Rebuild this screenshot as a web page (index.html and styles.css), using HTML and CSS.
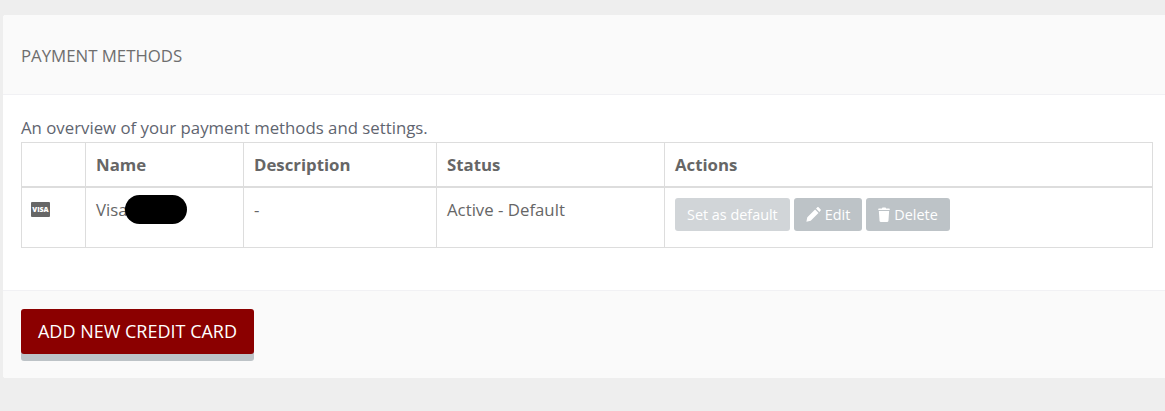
FILE: index.html
```html
<!DOCTYPE html>
<html lang="en">
<head>
<meta charset="utf-8">
<title>Payment methods</title>
<link rel="stylesheet" href="styles.css">
</head>
<body>
<section class="panel">
  <header class="panel-head"><h2>PAYMENT METHODS</h2></header>
  <div class="panel-body">
    <p class="intro">An overview of your payment methods and settings.</p>
    <table class="methods">
      <colgroup><col class="c-icon"><col class="c-name"><col class="c-desc"><col class="c-status"><col></colgroup>
      <thead>
        <tr><th></th><th>Name</th><th>Description</th><th>Status</th><th>Actions</th></tr>
      </thead>
      <tbody>
        <tr>
          <td><span class="visa">VISA</span></td>
          <td><span class="card-name">Visa<span class="redact"></span></span></td>
          <td>-</td>
          <td>Active - Default</td>
          <td class="actions">
            <button class="btn btn-light">Set as default</button>
            <button class="btn">
              <svg class="ico" viewBox="0 0 16 16" width="15" height="15"><path fill="currentColor" d="M0.4 15.6l1-4.6 8.3-8.3 3.6 3.6-8.3 8.3zM10.7 1.7l1.2-1.2c.5-.5 1.2-.5 1.7 0l1.9 1.9c.5.5.5 1.2 0 1.7l-1.2 1.2z"/></svg>
              Edit</button>
            <button class="btn">
              <svg class="ico" viewBox="0 0 14 16" width="12" height="15" preserveAspectRatio="none"><path fill="currentColor" d="M1 1.6h3.6L5.2.4h3.6l.6 1.2H13c.4 0 .7.3.7.7v.9H.3v-.9c0-.4.3-.7.7-.7zM1 4.2h12l-.8 10.5c0 .7-.6 1.3-1.3 1.3H3.1c-.7 0-1.3-.6-1.3-1.3z"/></svg>
              Delete</button>
          </td>
        </tr>
      </tbody>
    </table>
  </div>
  <footer class="panel-foot"><button class="add">ADD NEW CREDIT CARD</button></footer>
</section>
</body>
</html>
```
FILE: styles.css
```css
* { box-sizing: border-box; }
html, body { height: 100%; }
body {
  margin: 0;
  padding: 15px 0 0 3px;
  background: #eeeeee;
  font-family: "Open Sans", "Liberation Sans", sans-serif;
  font-size: 16.8px;
  color: #5f6570;
  overflow: hidden;
}
.panel {
  background: #fff;
  border-radius: 3px 0 0 3px;
  overflow: hidden;
}
.panel-head {
  height: 80px;
  padding: 2px 18px 0;
  display: flex;
  align-items: center;
  background: #fafafa;
  border-bottom: 1px solid #f1f1f4;
}
.panel-head h2 {
  margin: 0;
  font-size: 16.8px;
  font-weight: 400;
  color: #6e6e6e;
}
.panel-body {
  height: 195px;
  padding: 20px 12px 0 18px;
}
.intro {
  margin: 0;
  line-height: 25px;
  height: 27px;
  color: #5f6570;
}
.methods {
  width: 1132px;
  border-collapse: collapse;
  table-layout: fixed;
  color: #666;
}
.c-icon { width: 64px; }
.c-name { width: 158px; }
.c-desc { width: 193px; }
.c-status { width: 228px; }
.methods th, .methods td {
  border: 1px solid #dddddd;
  text-align: left;
  padding: 0 10px;
  vertical-align: top;
}
.methods th {
  padding-top: 1px;
  border-bottom-width: 2px;
  font-weight: 700;
  line-height: 42px;
  color: #666;
}
.methods td {
  height: 60px;
  padding-top: 10px;
  line-height: 24px;
}
.visa {
  display: block;
  width: 19px;
  height: 15px;
  margin: 4px 0 0 -1px;
  background: #666;
  border-radius: 1px;
  color: #fff;
  font-size: 7px;
  font-weight: 800;
  line-height: 15px;
  text-align: center;
}
.card-name { position: relative; display: inline-block; }
.redact {
  position: absolute;
  left: 29px;
  top: -3px;
  width: 62px;
  height: 29px;
  border-radius: 15px;
  background: #000;
}
.methods td.actions { padding-top: 10px; }
.actions { font-size: 0; }
.btn {
  display: inline-flex;
  align-items: center;
  justify-content: center;
  gap: 4px;
  height: 33px;
  margin: 0 4px 0 0;
  padding: 0 12px;
  border: 0;
  border-radius: 3px;
  background: #bdc3c7;
  color: #fff;
  font: 400 14.4px "Open Sans", "Liberation Sans", sans-serif;
  vertical-align: top;
}
.btn-light { background: #d1d5d8; }
.ico { display: block; }
.panel-foot {
  height: 88px;
  padding: 18px;
  background: #fafafa;
  border-top: 1px solid #f1f1f4;
}
.add {
  display: block;
  width: 233px;
  height: 45px;
  padding: 0 0 2px;
  border: 0;
  border-radius: 3px;
  background: #8b0000;
  box-shadow: 0 7px 0 #bdc3c7;
  color: #fff;
  font: 400 18px "Open Sans", "Liberation Sans", sans-serif;
}
```
